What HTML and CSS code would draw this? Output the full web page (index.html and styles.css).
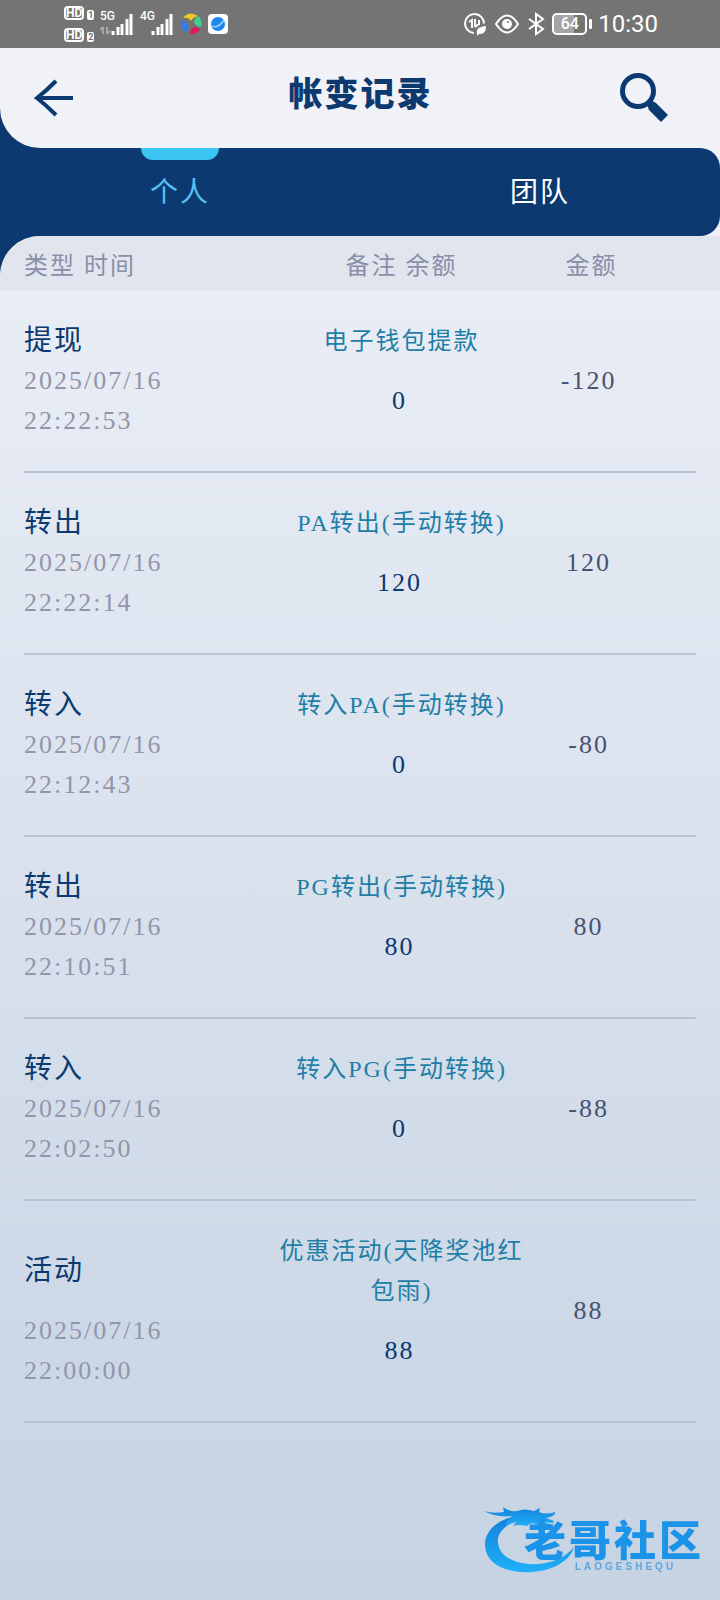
FILE: index.html
```html
<!DOCTYPE html>
<html lang="zh-CN">
<head>
    <meta charset="UTF-8">
    <meta name="viewport" content="width=device-width, initial-scale=1.0">
    <title>帐变记录</title>
    <link rel="stylesheet" href="styles.css">
</head>
<body>
    <div class="status-bar">
        <div class="status-left">
            <div class="hd">
                <div><b>HD</b><i>1</i></div>
                <div><b>HD</b><i>2</i></div>
            </div>
            <div class="network">
                <span>5G</span>
                <svg width="34" height="22" viewBox="0 0 34 22">
                    <path class="dim" d="M3 14v7M0 17l3-3M7 14v7M10 18l-3 3"/>
                    <path d="M13 22v-4M18 22v-8M22 22V11M27 22V6M31 22V1"/>
                </svg>
            </div>
            <div class="network">
                <span>4G</span>
                <svg width="34" height="22" viewBox="0 0 34 22">
                    <path d="M13 22v-4M18 22v-8M22 22V11M27 22V6M31 22V1"/>
                </svg>
            </div>
            <svg width="22" height="22" viewBox="0 0 22 22">
                <path fill="#f3c62c" d="M3 5Q9-3 18 3Q13 4 11 8Q8 4 3 5z"/>
                <path fill="#3fd08c" d="M18 3Q23 7 21 14Q16 14 14 9Q15 5 18 3z"/>
                <path fill="#e0195c" d="M20 16Q17 22 10 21Q10 16 14 14Q18 14 20 16z"/>
                <path fill="#2f7df0" d="M2 7Q-1 16 7 20Q9 16 7 12Q6 8 2 7z"/>
            </svg>
            <svg width="20" height="20" viewBox="0 0 20 20">
                <rect width="20" height="20" rx="4" fill="#fff"/>
                <circle cx="10" cy="10" r="7" fill="#1f86ee"/>
                <path d="M3 12q7 3 13-6" fill="none" stroke="#8fd0ff" stroke-width="1.5"/>
            </svg>
        </div>
        <div class="status-right">
            <svg width="24" height="24" viewBox="0 0 24 24">
                <path d="M11 21A9.500 9.500 0 1 1 21 11.500"/>
                <path d="M6 10l3-2v8M12 7v8M12 15l4-3M16 8v5"/>
                <path class="solid" d="M14 22q-2-7 9-8q0 9-7 8l-2 2z"/>
            </svg>
            <svg width="26" height="20" viewBox="0 0 26 20">
                <path d="M2 10Q13-7 24 10Q13 27 2 10z"/>
                <circle class="solid" cx="13" cy="10" r="5"/>
                <circle class="glint" cx="14" cy="8" r="1"/>
            </svg>
            <svg width="18" height="24" viewBox="0 0 18 24">
                <path d="M2 7l14 10-7 5V2l7 5L2 17"/>
            </svg>
            <div class="battery"><span>64</span></div>
            <time>10:30</time>
        </div>
    </div>

    <div class="screen">
        <header class="header">
            <a href="#" class="back" aria-label="返回">
                <svg width="40" height="40" viewBox="0 0 40 40">
                    <path d="M39 20H4M22 3Q12 13 3 20Q12 27 22 37"/>
                </svg>
            </a>
            <h1>帐变记录</h1>
            <button type="button" class="search" aria-label="搜索">
                <svg width="50" height="50" viewBox="0 0 50 50">
                    <circle cx="19" cy="18" r="15.500"/>
                    <path class="handle" d="M27 29L30 26L37 30L49 42L42 49L30 37z"/>
                </svg>
            </button>
        </header>

        <nav class="tabs">
            <a href="#" class="tab active">个人</a>
            <a href="#" class="tab">团队</a>
        </nav>

        <main class="list">
            <table>
                <thead>
                    <tr>
                        <th class="col-type">类型 时间</th>
                        <th class="col-note">备注 余额</th>
                        <th class="col-amount">金额</th>
                    </tr>
                </thead>
                <tbody>
                    <tr>
                        <td class="type">提现</td>
                        <td class="note">电子钱包提款</td>
                        <td class="amount" rowspan="2">-120</td>
                    </tr>
                    <tr>
                        <td class="date">2025/07/16<br>22:22:53</td>
                        <td class="balance">0</td>
                    </tr>
                </tbody>
                <tbody>
                    <tr>
                        <td class="type">转出</td>
                        <td class="note">PA转出(手动转换)</td>
                        <td class="amount" rowspan="2">120</td>
                    </tr>
                    <tr>
                        <td class="date">2025/07/16<br>22:22:14</td>
                        <td class="balance">120</td>
                    </tr>
                </tbody>
                <tbody>
                    <tr>
                        <td class="type">转入</td>
                        <td class="note">转入PA(手动转换)</td>
                        <td class="amount" rowspan="2">-80</td>
                    </tr>
                    <tr>
                        <td class="date">2025/07/16<br>22:12:43</td>
                        <td class="balance">0</td>
                    </tr>
                </tbody>
                <tbody>
                    <tr>
                        <td class="type">转出</td>
                        <td class="note">PG转出(手动转换)</td>
                        <td class="amount" rowspan="2">80</td>
                    </tr>
                    <tr>
                        <td class="date">2025/07/16<br>22:10:51</td>
                        <td class="balance">80</td>
                    </tr>
                </tbody>
                <tbody>
                    <tr>
                        <td class="type">转入</td>
                        <td class="note">转入PG(手动转换)</td>
                        <td class="amount" rowspan="2">-88</td>
                    </tr>
                    <tr>
                        <td class="date">2025/07/16<br>22:02:50</td>
                        <td class="balance">0</td>
                    </tr>
                </tbody>
                <tbody>
                    <tr>
                        <td class="type">活动</td>
                        <td class="note">优惠活动(天降奖池红包雨)</td>
                        <td class="amount" rowspan="2">88</td>
                    </tr>
                    <tr>
                        <td class="date">2025/07/16<br>22:00:00</td>
                        <td class="balance">88</td>
                    </tr>
                </tbody>
            </table>
        </main>
    </div>

    <!-- community logo, floats over the list -->
    <div class="watermark">
        <svg width="92" height="68" viewBox="0 0 92 68">
            <defs>
                <linearGradient id="blue" x1="0" y1="0" x2="0" y2="1">
                    <stop offset="0" stop-color="#1580dc"/>
                    <stop offset="1" stop-color="#1fb0f8"/>
                </linearGradient>
            </defs>
            <g fill="url(#blue)">
                <path d="M34 10C4 14-6 37 6 53C22 74 82 70 90 41C74 61 36 64 19 48C8 34 15 20 36 14z"/>
                <path d="M0 5Q8 8 20 6L19 1Q25 6 33 5Q40 2 50 5L56 2L55 6Q62 9 71 6Q72 10 62 12L70 15L69 17L58 16L70 19Q62 22 52 18Q46 16 43 20Q34 18 29 20L32 16Q25 17 22 20Q23 14 28 10Q12 12 0 5z"/>
            </g>
        </svg>
        <div class="brand">
            <strong>老哥社区</strong>
            <small>LAOGESHEQU</small>
        </div>
    </div>
</body>
</html>
```
FILE: styles.css
```css
* {
    box-sizing: border-box;
}

body {
    margin: 0;
    min-height: 100vh;
    display: flex;
    flex-direction: column;
    font-family: 'Liberation Serif', 'Noto Sans CJK SC', serif;
    letter-spacing: 2px;
    color: #0b3970;
    background-color: #c6d3e3;
}

a {
    color: inherit;
    text-decoration: none;
}

/* phone status bar */
.status-bar {
    height: 48px;
    padding: 0 62px 0 64px;
    display: flex;
    justify-content: space-between;
    align-items: center;
    background-color: #747474;
    color: #fff;
    font-family: Roboto, sans-serif;
    letter-spacing: 0;
}

.status-left {
    display: flex;
    align-items: center;
    gap: 6px;
}

.hd {
    display: flex;
    flex-direction: column;
    gap: 8px;
    width: 30px;
}

.hd div {
    display: flex;
    align-items: flex-end;
    gap: 3px;
}

.hd b {
    border: 2px solid #fff;
    border-radius: 4px;
    font-size: 12px;
    line-height: 10px;
}

.hd i {
    padding: 0 1px;
    border-radius: 2px;
    background-color: #fff;
    color: #747474;
    font-size: 9px;
    font-style: normal;
    font-weight: bold;
    line-height: 10px;
}

.network {
    position: relative;
}

.network span {
    position: absolute;
    top: -4px;
    left: 0;
    font-size: 12px;
    font-weight: 500;
    line-height: 14px;
}

.network svg {
    display: block;
    fill: none;
    stroke: #fff;
    stroke-width: 3;
}

.network .dim {
    stroke: #a8a8a8;
    stroke-width: 2;
}

.status-right {
    display: flex;
    align-items: center;
    gap: 7px;
}

.status-right svg {
    fill: none;
    stroke: #fff;
    stroke-width: 2;
}

.status-right .solid {
    fill: #fff;
    stroke: none;
}

.status-right .glint {
    fill: #747474;
    stroke: none;
}

.battery {
    position: relative;
    width: 35px;
    height: 22px;
    margin-right: 4px;
    border: 2px solid #fff;
    border-radius: 5px;
    background: linear-gradient(90deg, #a5a5a5 64%, #747474 64%) padding-box;
    font-size: 16px;
    font-weight: 500;
    line-height: 18px;
    text-align: center;
}

.battery::after {
    content: '';
    position: absolute;
    top: 4px;
    right: -7px;
    width: 3px;
    height: 10px;
    border-radius: 1px;
    background-color: #fff;
}

.status-right time {
    font-size: 24px;
}

/* the navy half shows behind the rounded left corners */
.screen {
    flex: 1;
    display: flex;
    flex-direction: column;
    background: linear-gradient(90deg, #0b3970 50%, #f1f2f8 50%);
}

.header {
    height: 100px;
    padding: 0 51px 0 34px;
    display: flex;
    align-items: center;
    background-color: #f1f2f8;
    border-bottom-left-radius: 40px;
}

.header svg {
    display: block;
    fill: none;
    stroke: #0b3970;
    stroke-width: 4;
}

.back {
    width: 68px;
}

.header h1 {
    flex: 1;
    margin: 0;
    padding-bottom: 6px;
    font-size: 34px;
    font-weight: 900;
    line-height: 40px;
    text-align: center;
}

.search {
    width: 50px;
    padding: 0;
    border: none;
    background: none;
    cursor: pointer;
}

.search circle {
    stroke-width: 5;
}

.search .handle {
    fill: #0b3970;
    stroke: none;
}

.tabs {
    display: flex;
    height: 88px;
    background-color: #0b3970;
    border-radius: 0 20px 20px 0;
}

.tab {
    flex: 1;
    position: relative;
    padding-top: 2px;
    color: #fff;
    font-size: 28px;
    line-height: 86px;
    text-align: center;
}

.tab.active {
    color: #56c1f0;
}

.tab.active::before {
    content: '';
    position: absolute;
    top: 0;
    left: 50%;
    width: 78px;
    height: 12px;
    margin-left: -39px;
    background-color: #3bc5f3;
    border-radius: 0 0 12px 12px;
}

.list {
    flex: 1;
    overflow: hidden;
    border-top-left-radius: 40px;
    background: linear-gradient(#eaeef6, #c6d3e3);
}

table {
    width: 100%;
    table-layout: fixed;
    border-collapse: separate;
    border-spacing: 0;
    font-size: 24px;
    line-height: 40px;
    text-align: center;
}

thead {
    background-color: #e1e5ee;
}

th {
    height: 55px;
    padding: 4px 0 0;
    color: #8a8eaa;
    font-weight: normal;
}

td {
    padding: 0;
}

.col-type {
    width: 37.5%;
    padding-left: 24px;
    text-align: left;
}

.col-note {
    width: 36%;
}

.col-note,
.note {
    padding-left: 4px;
}

.col-amount {
    padding-right: 66px;
}

.amount {
    padding-right: 72px;
}

tbody {
    background: linear-gradient(#bac3d3, #bac3d3) center bottom / calc(100% - 48px) 2px no-repeat;
}

tbody tr:first-child td {
    padding-top: 30px;
}

tbody tr:last-child td,
tbody .amount {
    padding-bottom: 32px;
}

.type,
.date {
    padding-left: 24px;
    text-align: left;
}

.type {
    font-size: 28px;
}

.note {
    color: #1f7ea6;
}

.date,
.balance,
.amount {
    font-size: 26px;
}

.date {
    color: #9196ab;
}

.amount {
    color: #4a5272;
}

.watermark {
    position: fixed;
    right: 16px;
    bottom: 26px;
    display: flex;
    align-items: flex-end;
    letter-spacing: 0;
}

/* the wordmark sits inside the dragon's curve */
.brand {
    display: flex;
    flex-direction: column;
    margin-left: -52px;
    font-family: 'Noto Sans CJK SC', sans-serif;
}

.brand strong {
    color: #1a93e8;
    font-size: 42px;
    font-weight: 900;
    letter-spacing: 3px;
    line-height: 44px;
}

.brand small {
    padding-left: 51px;
    color: #5fa5de;
    font-family: 'Liberation Sans', sans-serif;
    font-size: 10px;
    font-weight: bold;
    letter-spacing: 3px;
    line-height: 14px;
}
```
